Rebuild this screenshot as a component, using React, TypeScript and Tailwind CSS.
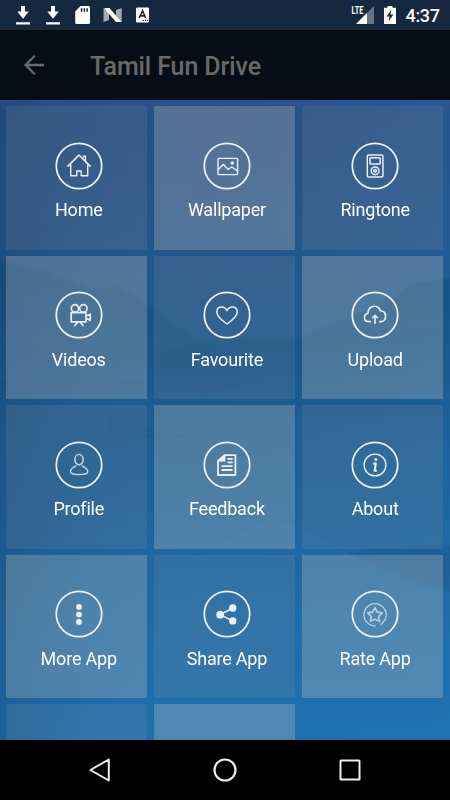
import type { ReactNode } from 'react';
import clsx from 'clsx';

const MENU: { label: string; icon: ReactNode }[] = [
  {
    label: 'Home',
    icon: (
      <g strokeWidth="1.4">
        <path d="M-11.5 .6 0-11 11.5.6" strokeWidth="1.6" />
        <path d="M4.6-8.6V-9.8H6.4V-5" />
        <path d="M-8.3-1.6V9.8H-2.2V5H2.2V9.8H8.7V-1.6" />
      </g>
    ),
  },
  {
    label: 'Wallpaper',
    icon: (
      <g strokeWidth="1.4">
        <rect x="-9" y="-7.6" width="19.6" height="16.2" rx=".8" />
        <path d="M-9 4-3.6-1.8 1 3.4 4.8 1 10.4 5" />
        <circle cx="5.3" cy="-3" r="1.8" fill="currentColor" stroke="none" />
      </g>
    ),
  },
  {
    label: 'Ringtone',
    icon: (
      <g strokeWidth="1.5">
        <rect x="-7.7" y="-11" width="15.6" height="22" rx="1.2" />
        <rect x="-5" y="-8.2" width="10.2" height="6.2" rx=".8" />
        <circle cx=".1" cy="4.8" r="3.9" />
        <circle cx=".1" cy="4.8" r="1.4" />
      </g>
    ),
  },
  {
    label: 'Videos',
    icon: (
      <g strokeWidth="1.7">
        <circle cx="-4" cy="-6.6" r="3.7" />
        <circle cx="4.4" cy="-6.6" r="3.7" />
        <rect x="-7.8" y="-2.4" width="14.8" height="9.2" />
        <path d="M7 .4H8.6L11.2-.8V5.2L8.6 4H7" />
        <path d="M-1.2 7.2-4.6 11M1.2 7.2 4.6 11" />
      </g>
    ),
  },
  {
    label: 'Favourite',
    icon: (
      <path
        d="M0 9C-6 4.8-10.2.8-10.2-3C-10.2-6-8.2-7.9-5.5-7.9C-3-7.9-1-6.6 0-4.4C1-6.6 3-7.9 5.5-7.9C8.2-7.9 10.2-6 10.2-3C10.2.8 6 4.8 0 9Z"
        strokeWidth="1.5"
      />
    ),
  },
  {
    label: 'Upload',
    icon: (
      <g strokeWidth="1.6">
        <path d="M-4 6.6H-6.2C-9 6.6-10.6 4.8-10.6 2.5-10.6.4-9.2-1.2-7.1-1.5-7.4-5.6-4.6-8.7-.8-8.7 2.4-8.7 4.5-7 5.3-4.2 8.6-4.1 10.6-2 10.6 1.2 10.6 4.4 8.6 6.6 5.8 6.6H4" />
        <path d="M0 9V.6M-2.8 3.2 0 .4 2.8 3.2" />
      </g>
    ),
  },
  {
    label: 'Profile',
    icon: (
      <g strokeWidth="1.4" opacity=".85">
        <ellipse cx="0" cy="-5.4" rx="4.2" ry="5.2" />
        <path d="M-3 .4C-3.2 2-8.5 2-8.5 6.8-8.5 8.6-5 9.6 0 9.6 5 9.6 8.7 8.6 8.7 6.8 8.7 2 3.2 2 3 .4" />
      </g>
    ),
  },
  {
    label: 'Feedback',
    icon: (
      <g strokeWidth="1.8">
        <path d="M-9-4.6V10H8.4V-9.8H-3" />
        <path d="M-9.8-3.4V-4.4L-3.2-10.6H-1.6V-3.4Z" fill="currentColor" stroke="none" />
        <path d="M.6-6.2H5.6M.6-2.6H5.6M-5.6 1.2H5.6M-5.6 5H5.6" />
      </g>
    ),
  },
  {
    label: 'About',
    icon: (
      <g strokeWidth="1.4">
        <circle r="10.9" />
        <circle cx=".9" cy="-5.6" r="1.5" fill="currentColor" stroke="none" />
        <path d="M-1.8-1.4H.8L-.4 5.8H1.9" strokeWidth="2.1" />
      </g>
    ),
  },
  {
    label: 'More App',
    icon: (
      <g fill="currentColor" stroke="none">
        <circle cy="-7" r="2.9" />
        <circle cy=".6" r="2.9" />
        <circle cy="8" r="2.9" />
      </g>
    ),
  },
  {
    label: 'Share App',
    icon: (
      <g strokeWidth="1.5">
        <path d="M5.7-6-6.8.7 5.7 6.9" />
        <g fill="currentColor" stroke="none">
          <circle cx="-6.8" cy=".7" r="3.9" />
          <circle cx="5.7" cy="-6" r="3.7" />
          <circle cx="5.7" cy="6.9" r="3.7" />
        </g>
      </g>
    ),
  },
  {
    label: 'Rate App',
    icon: (
      <g strokeWidth="1.3" opacity=".7">
        <path d="M.8 11.8A11.1 11.1 0 1 1 8.8 7.6L5.8 10.4" />
        <path
          d="M0-6.5 2.3-1.9 7.3-1.1 3.7 2.4 4.5 7.4 0 5.1-4.5 7.4-3.7 2.4-7.3-1.1-2.3-1.9Z"
          strokeWidth="1.6"
        />
      </g>
    ),
  },
];

function StatusBar() {
  return (
    <div className="flex h-[30px] shrink-0 items-center bg-[#152840] text-white">
      <svg className="h-[30px] w-[160px]" viewBox="0 0 160 30" fill="currentColor">
        <path d="M21 6h4v5.5h3.8L23 18.8l-5.8-7.3H21zM16 22.2h14v2.3H16z" />
        <path d="M51 6h4v5.5h3.8L53 18.8l-5.8-7.3H51zM46 22.2h14v2.3H46z" />
        <path
          fillRule="evenodd"
          d="M80.5 6H88.5Q90 6 90 7.5V22.5Q90 24 88.5 24H76.7Q75.2 24 75.2 22.5V11.5ZM80.8 8.3V11.7H82.3V8.3ZM83.6 8.3V11.7H85.1V8.3ZM86.4 8.3V11.7H87.9V8.3Z"
        />
        <path d="M103.5 8 109 12V20L103.5 22ZM116 10 121.7 8V22L116 18Z" opacity=".6" />
        <path d="M104 8H109.5L121.5 22H116Z" />
        <rect x="136" y="7.5" width="13" height="15" rx="1.2" />
        <path d="M139.3 18 142.5 10.8 145.7 18M140.6 15.9H144.4" fill="none" stroke="#152840" strokeWidth="1.6" />
        <path d="M142.7 19.8h1.2v1.2h-1.2zM144.9 19.8h1.2v1.2h-1.2zM147.1 19.8h1.2v1.2h-1.2z" fill="#152840" />
      </svg>
      <svg className="ml-auto h-[30px] w-[50px]" viewBox="350 0 50 30" fill="currentColor">
        <text x="351.6" y="13.8" fontSize="10" fontWeight="700" fontFamily="Roboto, sans-serif" textLength="11.8" lengthAdjust="spacingAndGlyphs">
          LTE
        </text>
        <path d="M374 5.8V24H367V13Z" opacity=".35" />
        <path d="M367 12.8V24H356Z" />
        <path d="M387.5 6h5v1.8h3.5v16.2h-12V7.8h3.5z" />
        <path d="M391.3 9.8 386.6 16.5H389.6L388.7 21.3 393.4 14.5H390.5Z" fill="#152840" />
      </svg>
      <span className="w-[50px] pt-px pl-[5.5px] text-[18px] leading-[30px] font-medium tracking-[-0.35px]">4:37</span>
    </div>
  );
}

function AppBar() {
  return (
    <header className="flex h-[70px] shrink-0 items-center border-y border-[#03070c] bg-[#070d16] text-[#696969]">
      <svg className="ml-6 h-5 w-5" viewBox="0 0 20 20" fill="none" stroke="currentColor" strokeWidth="2.3">
        <path d="M20 10H2M10.8.8 1.6 10 10.8 19.2" />
      </svg>
      <h1 className="ml-[46px] pt-0.5 text-[25px] leading-none font-medium tracking-[-0.1px] whitespace-nowrap">Tamil Fun Drive</h1>
    </header>
  );
}

// Misty lake and ridges behind the tiles
function Backdrop() {
  return (
    <svg className="absolute inset-0 h-full w-full" viewBox="0 0 450 640" preserveAspectRatio="none">
      <defs>
        <linearGradient id="sky" x1="0" y1="0" x2="0" y2="1">
          <stop offset="0" stopColor="#285293" />
          <stop offset=".02" stopColor="#264f82" />
          <stop offset=".25" stopColor="#23568c" />
          <stop offset=".4" stopColor="#1d5a90" />
          <stop offset=".6" stopColor="#1d6199" />
          <stop offset=".8" stopColor="#1f6ca8" />
          <stop offset="1" stopColor="#1f71b0" />
        </linearGradient>
        <linearGradient id="side" x1="0" y1="0" x2="1" y2="0">
          <stop offset="0" stopColor="#173c68" stopOpacity=".3" />
          <stop offset=".45" stopColor="#1f6aab" stopOpacity="0" />
          <stop offset="1" stopColor="#2373b8" stopOpacity=".2" />
        </linearGradient>
        <linearGradient id="ridge" x1="0" y1="0" x2="0" y2="1">
          <stop offset="0" stopColor="#12416f" stopOpacity=".3" />
          <stop offset="1" stopColor="#12416f" stopOpacity="0" />
        </linearGradient>
        <filter id="mist">
          <feGaussianBlur stdDeviation=".8" />
        </filter>
      </defs>
      <rect width="450" height="640" fill="url(#sky)" />
      <rect width="450" height="640" fill="url(#side)" />
      <g filter="url(#mist)">
        <path d="M-5 160 50 172 90 190 120 187 150 207 175 225 205 245 225 252 250 290-5 300Z" fill="url(#ridge)" />
        <path d="M150 254 200 243 230 238 300 240 318 229 330 225 350 217 370 211 388 199 397 196 405 187 420 182 455 178V320H150Z" fill="url(#ridge)" />
        <path d="M97 334 109 333 110 315 112 333 150 332 200 337V339H97Z" fill="#123d6b" opacity=".15" />
        <path d="M270 417 300 428 325 440 350 447 380 460H190Z" fill="#2a7dc0" opacity=".12" />
        <path d="M345 452 400 448 455 446V493L420 483 385 470 365 460Z" fill="#174c7e" opacity=".28" />
      </g>
    </svg>
  );
}

function Tile({ label, icon, light }: { label?: string; icon?: ReactNode; light: boolean }) {
  return (
    <div
      className={clsx(
        'flex flex-col items-center pt-[35.7px] pl-[4.5px]',
        light ? 'bg-[rgba(205,202,190,0.28)]' : 'bg-[rgba(178,165,158,0.14)]',
      )}
    >
      {icon && (
        <svg
          className="h-12 w-12 shrink-0 text-[#e9f0f6]"
          viewBox="-24 -24 48 48"
          fill="none"
          stroke="currentColor"
          strokeLinejoin="round"
        >
          <circle r="22.7" strokeWidth="1.8" />
          {icon}
        </svg>
      )}
      {label && <span className="mt-[9.5px] text-[18px] leading-[22px] tracking-[-0.2px] whitespace-nowrap text-white">{label}</span>}
    </div>
  );
}

function NavBar() {
  return (
    <nav className="flex h-[60px] shrink-0 items-center justify-center gap-[101px] bg-black text-[#eeeeee]">
      <svg className="h-6 w-6" viewBox="0 0 24 24" fill="none" stroke="currentColor" strokeWidth="2" strokeLinejoin="round">
        <path d="M20.8 1.5V22.5L2.4 12Z" />
      </svg>
      <svg className="h-6 w-6" viewBox="0 0 24 24" fill="none" stroke="currentColor" strokeWidth="2.2">
        <circle cx="12" cy="12" r="10.5" />
      </svg>
      <svg className="h-6 w-6" viewBox="0 0 24 24" fill="none" stroke="currentColor" strokeWidth="2">
        <rect x="2.5" y="2.5" width="19" height="19" rx=".6" />
      </svg>
    </nav>
  );
}

export default function App() {
  return (
    <div className="flex h-[800px] w-[450px] flex-col overflow-hidden bg-black font-[Roboto,sans-serif]">
      <StatusBar />
      <AppBar />
      <main className="relative min-h-0 flex-1 overflow-hidden">
        <Backdrop />
        <div className="relative grid auto-rows-[143.5px] grid-cols-[141px_141px_141px] gap-x-[7.2px] gap-y-[6.1px] pt-[6px] pl-[6px]">
          {MENU.map((item, i) => (
            <Tile key={item.label} label={item.label} icon={item.icon} light={i % 2 === 1} />
          ))}
          <Tile light={false} />
          <Tile light />
        </div>
      </main>
      <NavBar />
    </div>
  );
}
